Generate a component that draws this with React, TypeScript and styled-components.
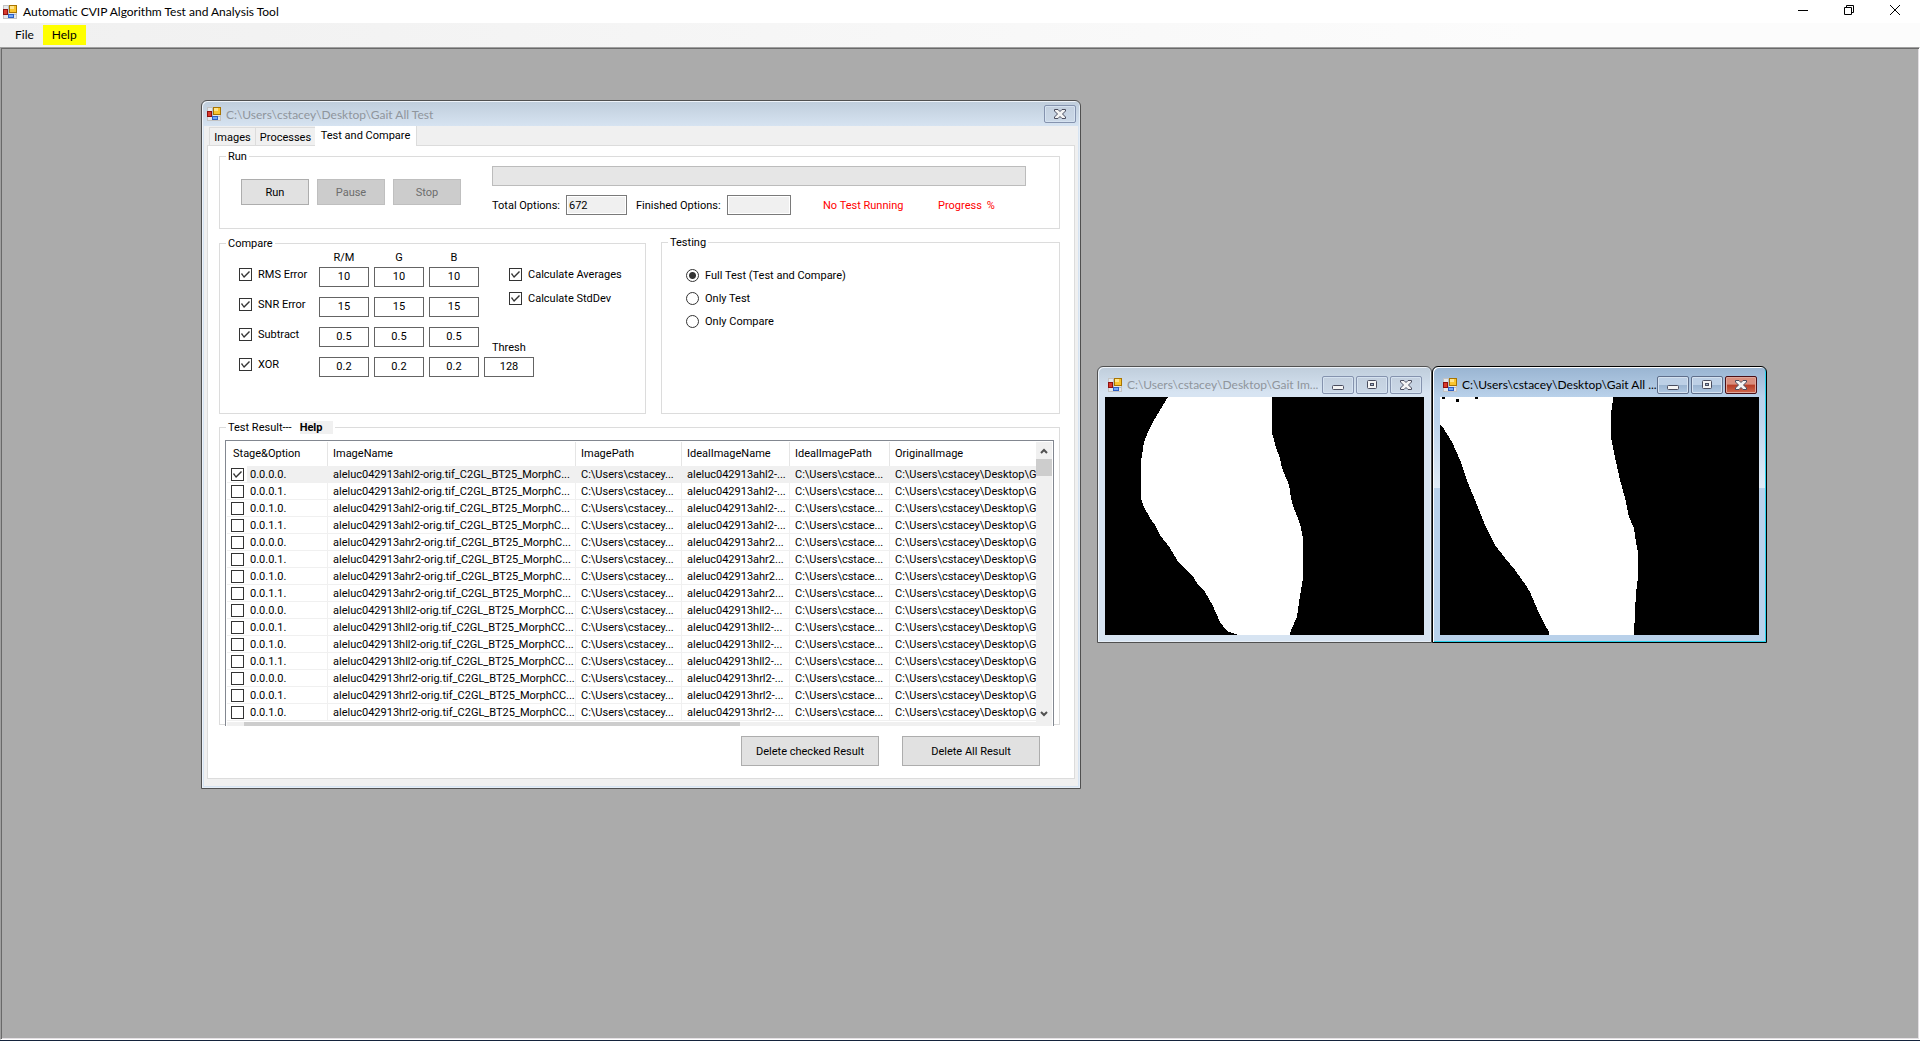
import React from 'react';
import styled, { createGlobalStyle, css } from 'styled-components';

const shellFont = 'Lato, "Open Sans", sans-serif';
const formFont = 'Roboto, "Liberation Sans", sans-serif';

const GlobalStyle = createGlobalStyle`
  *, *::before, *::after { box-sizing: border-box; }
  body { margin: 0; background: #ababab; }
  button, input { font: inherit; color: inherit; margin: 0; }
`;

const Shell = styled.div`
  display: flex;
  flex-direction: column;
  min-height: 100vh;
  font: 11px/13px ${formFont};
  color: #000;
  border-bottom: 1px solid #14233c;
  overflow: hidden;
`;

/* ---------- application frame ---------- */

const AppTitleBar = styled.header`
  display: flex;
  align-items: center;
  height: 23px;
  padding: 0 19px 0 3px;
  background: #fff;
  font: 12px/16px ${shellFont};
`;

const AppTitle = styled.h1`
  flex: 1;
  margin: 0 0 0 6px;
  font: inherit;
`;

const CaptionButtons = styled.div`
  display: flex;
  gap: 35px;
`;

const CaptionButton = styled.button`
  display: flex;
  width: 11px;
  height: 16px;
  padding: 0 0 3px;
  align-items: center;
  border: 0;
  background: none;
`;

const MenuBar = styled.nav`
  display: flex;
  align-items: center;
  height: 24px;
  padding-left: 6px;
  background: linear-gradient(to right, #f0f0f0, #fcfcfc 80%);
  font: 12px/16px ${shellFont};
`;

const MenuItem = styled.button<{ $highlight?: boolean }>`
  height: 20px;
  padding: 0 9px;
  border: 0;
  background: ${(p) => (p.$highlight ? '#ffff00' : 'none')};
`;

const Workspace = styled.main`
  position: relative;
  flex: 1;
  background: #ababab;
  border: 1px solid;
  border-color: #a0a0a0 #fff #fff #a0a0a0;
  box-shadow: inset 1px 1px 0 #696969, inset -1px -1px 0 #e3dfe3;
`;

/* ---------- MDI child windows ---------- */

const ChildFrame = styled.section<{ $x: number; $y: number; $w: number; $active?: boolean; $tight?: boolean }>`
  position: absolute;
  left: ${(p) => p.$x}px;
  top: ${(p) => p.$y}px;
  width: ${(p) => p.$w}px;
  padding: ${(p) => (p.$tight ? '0 2px 2px' : '0 7px 7px')};
  border: 1px solid ${(p) => (p.$active ? '#000' : '#505050')};
  border-radius: 6px 6px 0 0;
  ${(p) =>
    p.$active
      ? css`
          background: linear-gradient(#99b4d1, #b9d1ea 30px, #bcd3eb 50px, #e0ebf6 121px, #b9d1ea 121px);
          box-shadow: inset 1px 1px 0 #fff, inset -1px -1px 0 #28d2ec;
        `
      : css`
          background: linear-gradient(#bfcddb, #d7e4f2 26px);
          box-shadow: inset 1px 1px 0 #eef3f9, inset -1px -1px 0 #e6eef7;
        `}
`;

const ChildTitleBar = styled.div<{ $tall?: boolean; $active?: boolean }>`
  display: flex;
  align-items: ${(p) => (p.$tall ? 'flex-end' : 'flex-start')};
  height: ${(p) => (p.$tall ? 30 : 25)}px;
  padding: ${(p) => (p.$tall ? '0 2px 3px 3px' : '4px 2px 0 3px')};
  color: ${(p) => (p.$active ? '#000' : '#8f959c')};
  font: 12px ${shellFont};
  line-height: ${(p) => (p.$tall ? 18 : 20)}px;
`;

const ChildTitle = styled.h2`
  flex: 1;
  min-width: 0;
  margin: 0 0 0 5px;
  font: inherit;
  white-space: nowrap;
`;

const TitleIcon = styled.span`
  display: flex;
  height: 18px;
  align-items: center;
`;

const FrameButtons = styled.div`
  display: flex;
  flex: none;
  gap: 2px;
`;

const FrameButton = styled.button<{ $tone: 'idle' | 'live' | 'danger' }>`
  display: flex;
  align-items: center;
  justify-content: center;
  width: 32px;
  height: 18px;
  padding: 0;
  border-radius: 2px;
  border: 1px solid ${(p) => ({ idle: '#8593ae', live: '#5f6f8b', danger: '#4b0f16' })[p.$tone]};
  box-shadow: inset 0 0 0 1px ${(p) => (p.$tone === 'danger' ? '#e0a79b' : '#d5e2f0')};
  background: ${(p) =>
    ({
      idle: 'linear-gradient(#c3d0df, #cbd8e7)',
      live: 'linear-gradient(#bdd0e6 50%, #9ab4d0 50%, #b0c8e2)',
      danger: 'linear-gradient(#d98e7e 45%, #b73c25 50%, #cf6a50)',
    })[p.$tone]};
`;

const Picture = styled.svg`
  display: block;
  width: 100%;
  background: #000;
`;

/* ---------- form window ---------- */

const FormBody = styled.div`
  padding: 0 3px 7px;
  background: #f0f0f0;
`;

const TabStrip = styled.div`
  display: flex;
  align-items: flex-end;
  padding-left: 2px;
  height: 19px;
`;

const Tab = styled.button<{ $active?: boolean; $w: number }>`
  width: ${(p) => p.$w}px;
  height: ${(p) => (p.$active ? 20 : 18)}px;
  margin-bottom: ${(p) => (p.$active ? -1 : 0)}px;
  padding: ${(p) => (p.$active ? '0 0 2px' : '2px 0 0')};
  border: solid #dcdcdc;
  border-width: ${(p) => (p.$active ? '0 1px 0 0' : '1px 0 0 1px')};
  background: ${(p) => (p.$active ? '#fff' : '#f0f0f0')};
  white-space: nowrap;
`;

const TabPage = styled.div`
  display: flex;
  flex-direction: column;
  gap: 7px;
  padding: 4px 14px 12px 11px;
  border: 1px solid #dcdcdc;
  background: #fff;
`;

const Group = styled.fieldset<{ $h: number; $w?: number }>`
  min-width: 0;
  margin: 0;
  padding: 0 5px;
  border: 1px solid #dcdcdc;
  min-height: ${(p) => p.$h}px;
  ${(p) => (p.$w ? `width: ${p.$w}px;` : 'flex: 1;')}
`;

const ResultGroup = styled(Group)`
  flex: none;
  height: 304px;
`;

const GroupTitle = styled.legend`
  margin-left: 1px;
  padding: 0 2px;
  line-height: 13px;
`;

const HelpLink = styled.button`
  margin-left: 8px;
  width: 33px;
  height: 13px;
  padding: 0;
  border: 0;
  background: #f0f0f0;
  text-align: left;
  font-weight: bold;
  line-height: 13px;
`;

const GroupRow = styled.div`
  display: flex;
  align-items: flex-end;
  gap: 15px;
`;

const RunBody = styled.div`
  display: flex;
  gap: 30px;
  padding: 3px 28px 0 16px;
`;

const RunButtons = styled.div`
  display: flex;
  gap: 8px;
  width: 221px;
  padding-top: 13px;
`;

const PushButton = styled.button<{ $w: number; $h: number }>`
  width: ${(p) => p.$w}px;
  height: ${(p) => p.$h}px;
  padding: 0;
  border: 1px solid #adadad;
  background: #e1e1e1;
  &:disabled {
    color: #6d6d6d;
    border-color: #bfbfbf;
    background: #ccc;
  }
`;

const RunStatus = styled.div`
  flex: 1;
`;

const ProgressTrack = styled.div`
  height: 20px;
  margin-bottom: 9px;
  border: 1px solid #bcbcbc;
  background: #e6e6e6;
`;

const StatusGrid = styled.div`
  display: grid;
  grid-template-columns: 74px 70px 91px 96px 115px auto;
  align-items: center;
  white-space: nowrap;
`;

const Alert = styled.span`
  display: flex;
  gap: 5px;
  color: #ff0000;
`;

const ReadOnlyBox = styled.input<{ $w: number }>`
  width: ${(p) => p.$w}px;
  height: 20px;
  padding: 0 2px;
  border: 1px solid #7a7a7a;
  box-shadow: inset 0 0 0 1px #fff;
  background: #f0f0f0;
`;

const CompareBody = styled.div`
  display: flex;
  gap: 5px;
  padding-left: 14px;
`;

const CompareGrid = styled.div`
  display: flex;
  flex-direction: column;
  gap: 10px;
`;

const CompareRow = styled.div<{ $head?: boolean }>`
  display: grid;
  grid-template-columns: 75px repeat(3, 50px);
  column-gap: 5px;
  height: ${(p) => (p.$head ? 17 : 20)}px;
  padding-top: ${(p) => (p.$head ? 1 : 0)}px;
  margin-bottom: ${(p) => (p.$head ? -10 : 0)}px;
`;

const ColumnHead = styled.span`
  text-align: center;
`;

const ValueBox = styled.input`
  display: block;
  width: 50px;
  height: 20px;
  padding: 0 0 2px;
  border: 1px solid #646464;
  background: #fff;
  text-align: center;
`;

const SideColumn = styled.div`
  display: flex;
  flex-direction: column;
  justify-content: space-between;
`;

const AverageOptions = styled.div`
  display: flex;
  flex-direction: column;
  gap: 9px;
  padding: 17px 0 0 25px;
`;

const ThreshField = styled.label`
  display: flex;
  flex-direction: column;
  gap: 3px;
  span { padding-left: 8px; }
`;

const Choice = styled.label`
  display: flex;
  align-items: center;
  gap: 6px;
  height: 15px;
  white-space: nowrap;
`;

const RadioList = styled.div`
  display: flex;
  flex-direction: column;
  gap: 8px;
  padding: 19px 0 0 19px;
`;

const CheckBox = styled.input.attrs({ type: 'checkbox' })`
  appearance: none;
  flex: none;
  display: block;
  width: 13px;
  height: 13px;
  border: 1px solid #333;
  background: #fff;
  &:checked::after {
    content: '';
    display: block;
    width: 11px;
    height: 11px;
    background: #333;
    clip-path: polygon(1px 5px, 2px 4px, 4px 7px, 9px 2px, 10px 3px, 4px 9px);
  }
`;

const RadioDot = styled.input.attrs({ type: 'radio' })`
  appearance: none;
  flex: none;
  display: block;
  width: 13px;
  height: 13px;
  border: 1px solid #333;
  border-radius: 50%;
  background: #fff;
  &:checked {
    background: radial-gradient(circle, #333 3px, #fff 4px);
  }
`;

/* ---------- result list ---------- */

const ListView = styled.div`
  display: flex;
  flex-direction: column;
  height: 286px;
  margin-top: 6px;
  padding: 1px 1px 0;
  border: solid #828790;
  border-width: 1px 1px 0;
  background: #fff;
`;

const ListBody = styled.div`
  display: flex;
  height: 280px;
`;

const ListClip = styled.div`
  flex: 1;
  min-width: 0;
  overflow: hidden;
`;

const ResultTable = styled.table`
  width: 100%;
  table-layout: fixed;
  border-collapse: separate;
  border-spacing: 0;
`;

const HeadCell = styled.th<{ $w?: number }>`
  width: ${(p) => (p.$w ? `${p.$w}px` : 'auto')};
  height: 24px;
  padding: 0 0 2px 5px;
  border-right: 1px solid ${(p) => (p.$w ? '#e5e5e5' : 'transparent')};
  font-weight: normal;
  text-align: left;
  &:first-child { padding-left: 6px; }
`;

const Cell = styled.td<{ $selected?: boolean }>`
  height: 17px;
  padding: 1px 0 0 5px;
  overflow: hidden;
  white-space: nowrap;
  line-height: 15px;
  border: solid #f0f0f0;
  border-width: 0 1px 1px 0;
  background: ${(p) => (p.$selected ? '#f0f0f0' : '#fff')};
  &:first-child {
    padding-left: 4px;
    ${(p) => p.$selected && 'background: linear-gradient(to right, #fff 20px, #f0f0f0 20px);'}
  }
  &:last-child { border-right: 0; }
`;

const VerticalBar = styled.div`
  display: flex;
  flex-direction: column;
  width: 16px;
  background: #f0f0f0;
`;

const ArrowButton = styled.button`
  display: flex;
  align-items: center;
  justify-content: center;
  height: 17px;
  padding: 0;
  border: 0;
  background: none;
`;

const VerticalThumb = styled.div`
  height: 17px;
  margin-bottom: auto;
  background: #cdcdcd;
`;

const HorizontalBar = styled.div`
  height: 4px;
  padding-left: 17px;
  background: #f0f0f0;
`;

const HorizontalThumb = styled.div`
  width: 496px;
  height: 100%;
  background: #cdcdcd;
`;

const ActionRow = styled.div`
  display: flex;
  justify-content: flex-end;
  gap: 23px;
  padding: 4px 20px 0 0;
`;

/* ---------- drawings ---------- */

const FormIcon = () => (
  <svg width="14" height="14" viewBox="0 0 14 14" aria-hidden="true" shapeRendering="crispEdges">
    <rect x="0.5" y="0.5" width="13" height="13" fill="#e4e8ec" stroke="#c3c3c3" />
    <path d="M5.5 1v12M1 9.5h12M1 4.5h4" stroke="#b9bdc4" fill="none" />
    <rect x="0" y="4" width="5" height="6" fill="#8e1010" />
    <rect x="1" y="5" width="3" height="4" fill="#d93a2b" />
    <rect x="6" y="0" width="8" height="8" fill="#a87400" />
    <rect x="7" y="1" width="6" height="6" fill="#f9c52f" />
    <rect x="7" y="1" width="4" height="3" fill="#ffe48a" />
    <rect x="5" y="9" width="6" height="4" fill="#2d5fc4" />
    <rect x="6" y="10" width="4" height="2" fill="#74a8f5" />
  </svg>
);

const CrossGlyph = () => (
  <svg width="12" height="10" viewBox="0 0 12 10" aria-hidden="true">
    <path
      d="M.5 .5h3.500l2 2 2-2h3.500v1.500L8.500 5l3 3v1.500H8l-2-2-2 2H.5V8l3-3-3-3z"
      fill="#f4f4f4"
      stroke="#4a4d5e"
    />
  </svg>
);

const MinimizeGlyph = () => (
  <svg width="12" height="10" viewBox="0 0 12 10" aria-hidden="true">
    <rect x="0.5" y="5.5" width="11" height="4" rx="1" fill="#f4f4f4" stroke="#4a4d5e" />
  </svg>
);

const MaximizeGlyph = () => (
  <svg width="12" height="10" viewBox="0 0 12 10" aria-hidden="true">
    <rect x="1.5" y="0.5" width="9" height="8" rx="1" fill="#f4f4f4" stroke="#4a4d5e" />
    <rect x="4.5" y="3.5" width="3" height="2" fill="#9fb4cd" stroke="#4a4d5e" />
  </svg>
);

const Arrow = ({ down }: { down?: boolean }) => (
  <svg width="8" height="6" viewBox="0 0 8 6" aria-hidden="true">
    <path d={down ? 'M1 1l3 3 3-3' : 'M1 5l3-3 3 3'} fill="none" stroke="#505050" strokeWidth="2" />
  </svg>
);

/* ---------- data ---------- */

const metrics = [
  { name: 'RMS Error', value: '10' },
  { name: 'SNR Error', value: '15' },
  { name: 'Subtract', value: '0.5' },
  { name: 'XOR', value: '0.2' },
];
const channels = ['R/M', 'G', 'B'];

const columns: { title: string; width?: number }[] = [
  { title: 'Stage&Option', width: 101 },
  { title: 'ImageName', width: 248 },
  { title: 'ImagePath', width: 106 },
  { title: 'IdealImageName', width: 108 },
  { title: 'IdealImagePath', width: 100 },
  { title: 'OriginalImage' },
];

const stages = ['0.0.0.0.', '0.0.0.1.', '0.0.1.0.', '0.0.1.1.'];
const subjects = [
  { name: 'aleluc042913ahl2-orig.tif_C2GL_BT25_MorphC...', ideal: 'aleluc042913ahl2-...' },
  { name: 'aleluc042913ahr2-orig.tif_C2GL_BT25_MorphC...', ideal: 'aleluc042913ahr2...' },
  { name: 'aleluc042913hll2-orig.tif_C2GL_BT25_MorphCC...', ideal: 'aleluc042913hll2-...' },
  { name: 'aleluc042913hrl2-orig.tif_C2GL_BT25_MorphCC...', ideal: 'aleluc042913hrl2-...' },
];
const results = subjects.flatMap((s) => stages.map((stage) => ({ stage, ...s }))).slice(0, 15);

const FormWindow = () => (
  <ChildFrame $x={200} $y={52} $w={880} $tight>
    <ChildTitleBar>
      <TitleIcon><FormIcon /></TitleIcon>
      <ChildTitle>C:\Users\cstacey\Desktop\Gait All Test</ChildTitle>
      <FrameButton $tone="idle" aria-label="Close"><CrossGlyph /></FrameButton>
    </ChildTitleBar>
    <FormBody>
      <TabStrip role="tablist">
        <Tab role="tab" $w={46}>Images</Tab>
        <Tab role="tab" $w={60}>Processes</Tab>
        <Tab role="tab" aria-selected $active $w={102}>Test and Compare</Tab>
      </TabStrip>
      <TabPage>
        <Group $h={79}>
          <GroupTitle>Run</GroupTitle>
          <RunBody>
            <RunButtons>
              <PushButton $w={68} $h={26}>Run</PushButton>
              <PushButton $w={68} $h={26} disabled>Pause</PushButton>
              <PushButton $w={68} $h={26} disabled>Stop</PushButton>
            </RunButtons>
            <RunStatus>
              <ProgressTrack role="progressbar" aria-label="Test progress" />
              <StatusGrid>
                <label htmlFor="total">Total Options:</label>
                <ReadOnlyBox id="total" $w={61} readOnly value="672" />
                <label htmlFor="finished">Finished Options:</label>
                <ReadOnlyBox id="finished" $w={64} readOnly value="" />
                <Alert>No Test Running</Alert>
                <Alert><span>Progress</span><span>%</span></Alert>
              </StatusGrid>
            </RunStatus>
          </RunBody>
        </Group>

        <GroupRow>
          <Group $h={177} $w={427}>
            <GroupTitle>Compare</GroupTitle>
            <CompareBody>
              <CompareGrid>
                <CompareRow $head>
                  <span />
                  {channels.map((c) => <ColumnHead key={c}>{c}</ColumnHead>)}
                </CompareRow>
                {metrics.map((m) => (
                  <CompareRow key={m.name}>
                    <Choice><CheckBox defaultChecked />{m.name}</Choice>
                    {channels.map((c) => (
                      <ValueBox key={c} defaultValue={m.value} aria-label={`${m.name} ${c}`} />
                    ))}
                  </CompareRow>
                ))}
              </CompareGrid>
              <SideColumn>
                <AverageOptions>
                  <Choice><CheckBox defaultChecked />Calculate Averages</Choice>
                  <Choice><CheckBox defaultChecked />Calculate StdDev</Choice>
                </AverageOptions>
                <ThreshField>
                  <span>Thresh</span>
                  <ValueBox defaultValue="128" />
                </ThreshField>
              </SideColumn>
            </CompareBody>
          </Group>

          <Group $h={178}>
            <GroupTitle>Testing</GroupTitle>
            <RadioList>
              <Choice><RadioDot name="mode" defaultChecked />Full Test (Test and Compare)</Choice>
              <Choice><RadioDot name="mode" />Only Test</Choice>
              <Choice><RadioDot name="mode" />Only Compare</Choice>
            </RadioList>
          </Group>
        </GroupRow>

        <ResultGroup $h={304}>
          <GroupTitle>Test Result---<HelpLink>Help</HelpLink></GroupTitle>
          <ListView>
            <ListBody>
              <ListClip>
                <ResultTable>
                  <thead>
                    <tr>{columns.map((c) => <HeadCell key={c.title} $w={c.width}>{c.title}</HeadCell>)}</tr>
                  </thead>
                  <tbody>
                    {results.map((r, i) => (
                      <tr key={i}>
                        <Cell $selected={i === 0}>
                          <Choice><CheckBox defaultChecked={i === 0} />{r.stage}</Choice>
                        </Cell>
                        <Cell $selected={i === 0}>{r.name}</Cell>
                        <Cell $selected={i === 0}>C:\Users\cstacey...</Cell>
                        <Cell $selected={i === 0}>{r.ideal}</Cell>
                        <Cell $selected={i === 0}>C:\Users\cstace...</Cell>
                        <Cell $selected={i === 0}>C:\Users\cstacey\Desktop\G</Cell>
                      </tr>
                    ))}
                  </tbody>
                </ResultTable>
              </ListClip>
              <VerticalBar>
                <ArrowButton aria-label="Scroll up"><Arrow /></ArrowButton>
                <VerticalThumb />
                <ArrowButton aria-label="Scroll down"><Arrow down /></ArrowButton>
              </VerticalBar>
            </ListBody>
            <HorizontalBar><HorizontalThumb /></HorizontalBar>
          </ListView>
        </ResultGroup>

        <ActionRow>
          <PushButton $w={138} $h={30}>Delete checked Result</PushButton>
          <PushButton $w={138} $h={30}>Delete All Result</PushButton>
        </ActionRow>
      </TabPage>
    </FormBody>
  </ChildFrame>
);

type ImageWindowProps = { x: number; title: string; active?: boolean; children: React.ReactNode };

const ImageWindow = ({ x, title, active, children }: ImageWindowProps) => (
  <ChildFrame $x={x} $y={318} $w={335} $active={active}>
    <ChildTitleBar $tall $active={active}>
      <TitleIcon><FormIcon /></TitleIcon>
      <ChildTitle>{title}</ChildTitle>
      <FrameButtons>
        <FrameButton $tone={active ? 'live' : 'idle'} aria-label="Minimize"><MinimizeGlyph /></FrameButton>
        <FrameButton $tone={active ? 'live' : 'idle'} aria-label="Maximize"><MaximizeGlyph /></FrameButton>
        <FrameButton $tone={active ? 'danger' : 'idle'} aria-label="Close"><CrossGlyph /></FrameButton>
      </FrameButtons>
    </ChildTitleBar>
    <Picture viewBox="0 0 319 238" shapeRendering="crispEdges" role="img" aria-label="Binary mask">
      {children}
    </Picture>
  </ChildFrame>
);

export default function App() {
  return (
    <>
      <GlobalStyle />
      <Shell>
        <AppTitleBar>
          <FormIcon />
          <AppTitle>Automatic CVIP Algorithm Test and Analysis Tool</AppTitle>
          <CaptionButtons>
            <CaptionButton aria-label="Minimize">
              <svg width="10" height="10" viewBox="0 0 10 10"><path d="M0 5.5h10" stroke="#000" /></svg>
            </CaptionButton>
            <CaptionButton aria-label="Restore">
              <svg width="10" height="10" viewBox="0 0 10 10"><path d="M.5 2.5h7v7h-7zM2.500 2.500v-2h7v7h-2" fill="none" stroke="#000" /></svg>
            </CaptionButton>
            <CaptionButton aria-label="Close">
              <svg width="10" height="10" viewBox="0 0 10 10"><path d="M0 0l10 10M10 0L0 10" stroke="#000" /></svg>
            </CaptionButton>
          </CaptionButtons>
        </AppTitleBar>
        <MenuBar>
          <MenuItem>File</MenuItem>
          <MenuItem $highlight>Help</MenuItem>
        </MenuBar>
        <Workspace>
          <FormWindow />
          <ImageWindow x={1096} title="C:\Users\cstacey\Desktop\Gait Im...">
            <polygon
              fill="#fff"
              points="63,0 60,5 55,13 48,25 43,35 39,45 37,58 36,65 36,101 38,108 45,121 50,128 55,138 65,151 72,163 78,170 87,178 92,186 100,195 108,209 111,216 115,225 122,234 133,238 185,238 186,233 192,220 194,205 196,193 198,181 198,141 196,131 193,121 189,112 186,101 184,88 177,71 175,61 171,51 168,39 167,36 167,1 166,0"
            />
          </ImageWindow>
          <ImageWindow x={1431} active title="C:\Users\cstacey\Desktop\Gait All ...">
            <polygon
              fill="#fff"
              points="0,0 0,28 2,29 12,45 20,63 28,86 37,108 45,128 55,148 65,161 75,173 85,187 90,195 98,214 104,226 109,235 109,238 194,238 195,215 196,196 198,180 198,155 196,145 194,131 189,120 185,101 180,83 174,56 171,40 171,16 173,3 173,0"
            />
            <path d="M2 0h3v2h-3zM16 2h3v3h-3zM35 0h3v2h-3z" fill="#000" />
          </ImageWindow>
        </Workspace>
      </Shell>
    </>
  );
}
